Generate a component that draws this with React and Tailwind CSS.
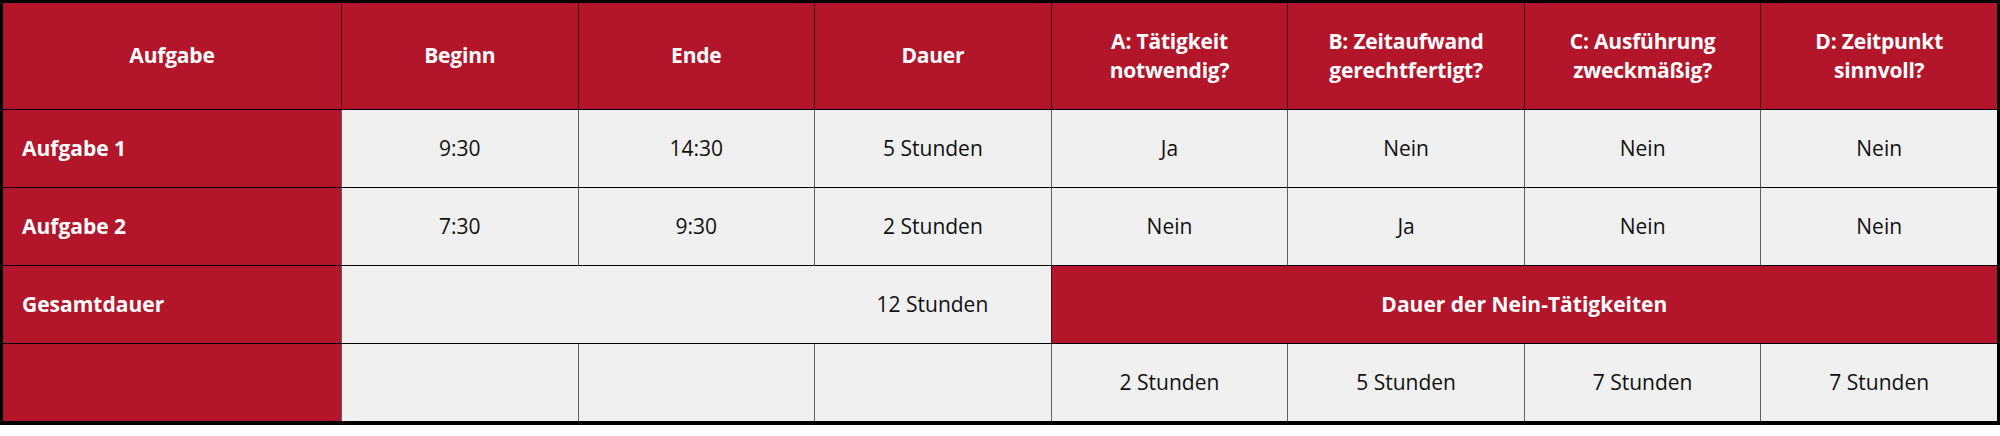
import React from 'react';

const red = 'bg-[#b3152b] text-white font-bold';
const grey = 'bg-[#f0f0f0] text-[#111]';

const header = [
    ['Aufgabe'],
    ['Beginn'],
    ['Ende'],
    ['Dauer'],
    ['A: Tätigkeit', 'notwendig?'],
    ['B: Zeitaufwand', 'gerechtfertigt?'],
    ['C: Ausführung', 'zweckmäßig?'],
    ['D: Zeitpunkt', 'sinnvoll?'],
];

const tasks = [
    ['Aufgabe 1', '9:30', '14:30', '5 Stunden', 'Ja', 'Nein', 'Nein', 'Nein'],
    ['Aufgabe 2', '7:30', '9:30', '2 Stunden', 'Nein', 'Ja', 'Nein', 'Nein'],
];

const Cell = ({ className = '', children }) => (
    <div className={`flex items-center justify-center text-center ${className}`}>
        {children}
    </div>
);

export default function App() {
    return (
        <div
            className="w-[2000px] bg-white text-[21px] leading-[1.4]"
            style={{ fontFamily: '"Open Sans", "Noto Sans", sans-serif' }}
        >
            <div className="grid grid-cols-[338px_repeat(7,1fr)] border-[3px] border-b-4 border-black">
                {/* Header */}
                {header.map((lines, i) => (
                    <Cell
                        key={i}
                        className={`${red} h-[107px] border-b border-black ${i > 0 ? 'border-l border-l-black/60' : ''}`}
                    >
                        <div className="tracking-[-0.2px]">
                            {lines.map((l) => (
                                <div key={l}>{l}</div>
                            ))}
                        </div>
                    </Cell>
                ))}

                {/* Task rows */}
                {tasks.map((row) =>
                    row.map((v, i) =>
                        i === 0 ? (
                            <div key={v} className={`${red} h-[78px] border-b border-black flex items-center pl-[19px]`}>
                                {v}
                            </div>
                        ) : (
                            <Cell key={row[0] + i} className={`${grey} h-[78px] border-b border-black border-l border-l-black/60`}>
                                {v}
                            </Cell>
                        )
                    )
                )}

                {/* Gesamtdauer */}
                <div className={`${red} h-[78px] border-b border-black flex items-center pl-[19px]`}>Gesamtdauer</div>
                <div className={`${grey} h-[78px] border-b border-black border-l border-l-black/60`} />
                <div className={`${grey} h-[78px] border-b border-black`} />
                <Cell className={`${grey} h-[78px] border-b border-black`}>12 Stunden</Cell>
                <Cell className={`${red} col-span-4 h-[78px] border-b border-black border-l border-l-black/60`}>
                    Dauer der Nein-Tätigkeiten
                </Cell>

                {/* Nein-Dauer */}
                <div className={`${red} h-[77px]`} />
                {['', '', '', '2 Stunden', '5 Stunden', '7 Stunden', '7 Stunden'].map((v, i) => (
                    <Cell key={i} className={`${grey} h-[77px] border-l border-l-black/60`}>
                        {v}
                    </Cell>
                ))}
            </div>
        </div>
    );
}
